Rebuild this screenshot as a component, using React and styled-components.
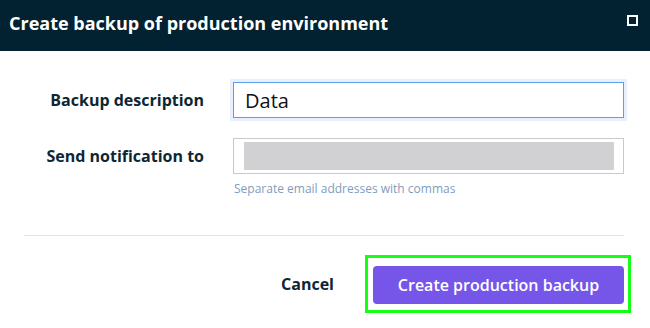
import React from "react";
import styled, { createGlobalStyle } from "styled-components";

const Global = createGlobalStyle`
  html, body { margin: 0; padding: 0; background: #fff; }
  body { font-family: "Open Sans", "Liberation Sans", sans-serif; }
  * { box-sizing: border-box; }
`;

const Dialog = styled.div`
  width: 650px;
  height: 328px;
  background: #fff;
  display: flex;
  flex-direction: column;
  overflow: hidden;
`;

const Header = styled.header`
  height: 51px;
  background: #022232;
  display: flex;
  align-items: center;
  justify-content: space-between;
  padding: 0 12px 0 9px;
`;

const Title = styled.h1`
  margin: 0 0 6px;
  color: #fff;
  font-size: 18px;
  font-weight: 700;
  letter-spacing: 0;
`;

const MaxIcon = styled.span`
  width: 11px;
  height: 11px;
  border: 2px solid #fff;
  margin-bottom: 10px;
  display: block;
`;

const Body = styled.div`
  padding: 31px 26px 0 24px;
  display: grid;
  grid-template-columns: 180px 1fr;
  column-gap: 29px;
  row-gap: 20px;
  align-items: start;
`;

const Label = styled.label`
  text-align: right;
  font-size: 16px;
  font-weight: 700;
  color: #0d2634;
  line-height: 36px;
`;

const Field = styled.div`
  display: flex;
  flex-direction: column;
  gap: 6px;
`;

const TextInput = styled.div`
  height: 36px;
  border: 1px solid ${(p) => (p.$focused ? "#5a9fe8" : "#c9c9c9")};
  box-shadow: ${(p) => (p.$focused ? "0 0 0 3px rgba(120,170,235,0.18)" : "none")};
  background: #fff;
  display: flex;
  align-items: center;
  padding: ${(p) => (p.$focused ? "0 11px" : "3px 9px 3px 10px")};
  font-size: 20px;
  color: #111;
`;

const Redacted = styled.div`
  flex: 1;
  align-self: stretch;
  background: #d1d1d3;
`;

const Help = styled.div`
  font-size: 12px;
  color: #7f9dbd;
  padding-left: 1px;
`;

const Divider = styled.hr`
  margin: 38px 26px 0 24px;
  border: none;
  border-top: 1px solid #e2e2e2;
  height: 0;
`;

const Footer = styled.div`
  display: flex;
  justify-content: flex-end;
  align-items: center;
  padding: 19px 19px 0 0;
  gap: 31px;
`;

const Cancel = styled.button`
  background: none;
  border: none;
  font-family: inherit;
  font-size: 16px;
  font-weight: 700;
  color: #0d2634;
  padding: 0;
  cursor: pointer;
`;

const Highlight = styled.div`
  border: 3px solid #14ff14;
  padding: 8px 4px 6px 5px;
`;

const Primary = styled.button`
  width: 251px;
  height: 38px;
  border: none;
  border-radius: 4px;
  background: #7556e9;
  color: #fff;
  font-family: inherit;
  font-size: 16px;
  font-weight: 600;
  cursor: pointer;
`;

export default function App() {
  return (
    <>
      <Global />
      <Dialog>
        <Header>
          <Title>Create backup of production environment</Title>
          <MaxIcon />
        </Header>
        <Body>
          <Label>Backup description</Label>
          <TextInput $focused>Data</TextInput>
          <Label>Send notification to</Label>
          <Field>
            <TextInput>
              <Redacted />
            </TextInput>
            <Help>Separate email addresses with commas</Help>
          </Field>
        </Body>
        <Divider />
        <Footer>
          <Cancel>Cancel</Cancel>
          <Highlight>
            <Primary>Create production backup</Primary>
          </Highlight>
        </Footer>
      </Dialog>
    </>
  );
}
